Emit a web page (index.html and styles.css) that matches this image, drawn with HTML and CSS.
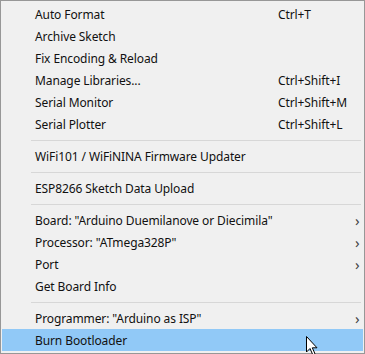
FILE: index.html
```html
<!DOCTYPE html>
<html lang="en">
<head>
    <meta charset="UTF-8">
    <title>Tools</title>
    <link rel="stylesheet" href="styles.css">
</head>
<body>
    <div class="menu">
        <div class="item"><span class="label">Auto Format</span><span class="key">Ctrl+T</span></div>
        <div class="item"><span class="label">Archive Sketch</span></div>
        <div class="item"><span class="label">Fix Encoding &amp; Reload</span></div>
        <div class="item"><span class="label">Manage Libraries...</span><span class="key">Ctrl+Shift+I</span></div>
        <div class="item"><span class="label">Serial Monitor</span><span class="key">Ctrl+Shift+M</span></div>
        <div class="item"><span class="label">Serial Plotter</span><span class="key">Ctrl+Shift+L</span></div>
        <div class="sep"></div>
        <div class="item"><span class="label">WiFi101 / WiFiNINA Firmware Updater</span></div>
        <div class="sep"></div>
        <div class="item"><span class="label">ESP8266 Sketch Data Upload</span></div>
        <div class="sep"></div>
        <div class="item"><span class="label">Board: "Arduino Duemilanove or Diecimila"</span><span class="arrow">&#8250;</span></div>
        <div class="item"><span class="label">Processor: "ATmega328P"</span><span class="arrow">&#8250;</span></div>
        <div class="item"><span class="label">Port</span><span class="arrow">&#8250;</span></div>
        <div class="item"><span class="label">Get Board Info</span></div>
        <div class="sep"></div>
        <div class="item"><span class="label">Programmer: "Arduino as ISP"</span><span class="arrow">&#8250;</span></div>
        <div class="item active"><span class="label">Burn Bootloader</span>
            <svg class="cursor" width="14" height="20" viewBox="0 0 14 20">
                <path d="M0.5 0.5 L0.5 16 L4 12.5 L6.8 18.8 L9 17.8 L6.3 11.8 L11 11.8 Z" fill="#fff" stroke="#000" stroke-width="1"/>
            </svg>
        </div>
    </div>
</body>
</html>
```
FILE: styles.css
```css
body{
 margin: 0;
 background: #f0f0f0;
 font-family: "Noto Sans", "Open Sans", sans-serif;
 font-size: 12px;
 color: #111;
}
.menu{
 width: 365px;
 height: 354px;
 box-sizing: border-box;
 border: 1px solid #979797;
 padding: 2px 1px 1px 1px;
 background: #f0f0f0;
 position: relative;
}
.item{
 height: 22px;
 display: flex;
 align-items: center;
 position: relative;
 letter-spacing: -0.1px;
}
.label{
 padding-left: 33px;
 flex: 1;
}
.key{
 width: 85px;
}
.arrow{
 width: 8px;
 font-size: 15px;
 color: #444;
}
.sep{
 height: 10px;
 display: flex;
 align-items: center;
}
.sep::after{
 content: "";
 display: block;
 margin-left: 29px;
 margin-right: 2px;
 height: 1px;
 flex: 1;
 background: #d7d7d7;
}
.active{
 background: #91c9f7;
}
.cursor{
 position: absolute;
 left: 304px;
 top: 7px;
}
```
